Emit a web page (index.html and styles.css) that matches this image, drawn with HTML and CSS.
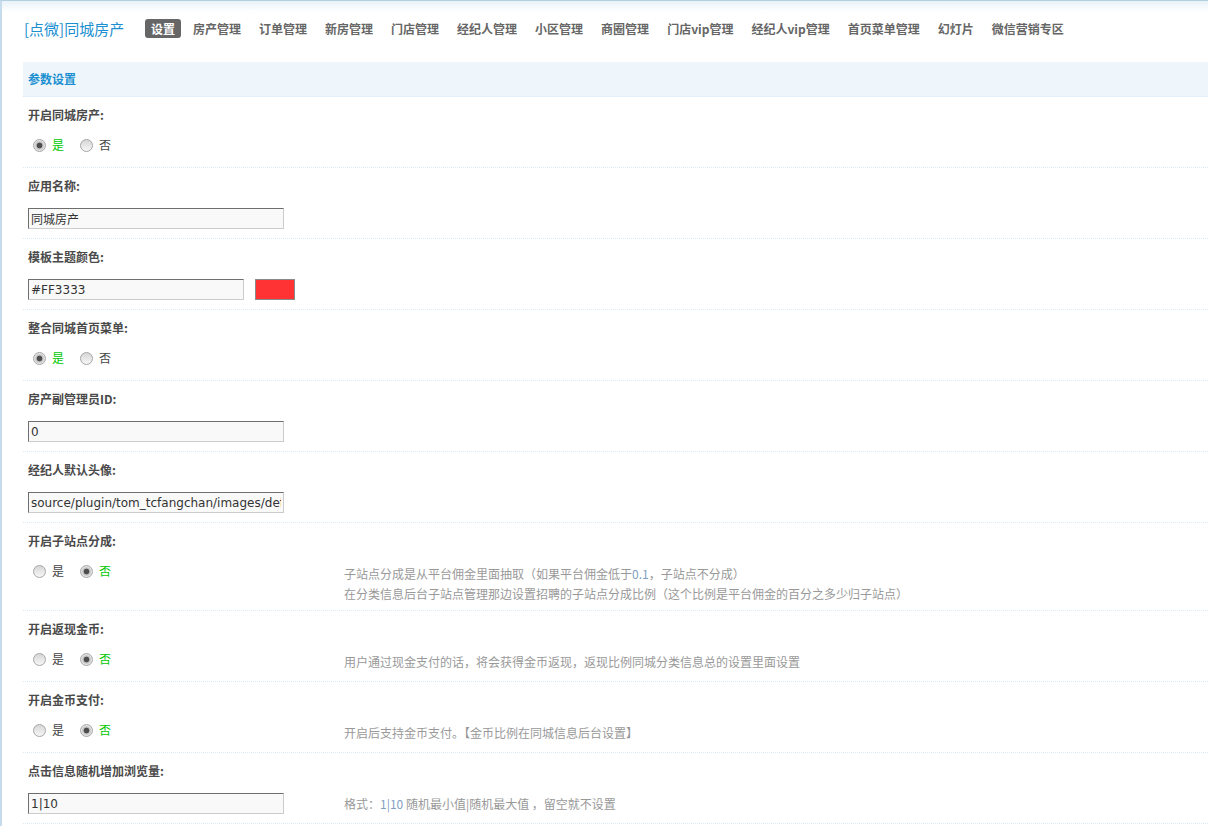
FILE: index.html
```html
<!DOCTYPE html>
<html lang="zh-CN">
<head>
<meta charset="utf-8">
<title>同城房产 - 设置</title>
<link rel="stylesheet" href="styles.css">
</head>
<body>
<div class="page">
  <div class="topbar">
    <h3 class="title">[点微]同城房产</h3>
    <ul class="nav">
      <li class="active">设置</li>
      <li>房产管理</li>
      <li>订单管理</li>
      <li>新房管理</li>
      <li>门店管理</li>
      <li>经纪人管理</li>
      <li>小区管理</li>
      <li>商圈管理</li>
      <li>门店vip管理</li>
      <li>经纪人vip管理</li>
      <li>首页菜单管理</li>
      <li>幻灯片</li>
      <li>微信营销专区</li>
    </ul>
  </div>

  <div class="form">
    <div class="partition">参数设置</div>

    <div class="item">
      <div class="label">开启同城房产:</div>
      <div class="value">
        <div class="ctrl radios">
          <label class="opt on"><input type="radio" name="r1" checked><span>是</span></label>
          <label class="opt"><input type="radio" name="r1"><span>否</span></label>
        </div>
        <div class="tip"></div>
      </div>
    </div>

    <div class="item">
      <div class="label">应用名称:</div>
      <div class="value">
        <div class="ctrl"><input class="txt" type="text" value="同城房产"></div>
        <div class="tip"></div>
      </div>
    </div>

    <div class="item">
      <div class="label">模板主题颜色:</div>
      <div class="value">
        <div class="ctrl color-ctrl"><input class="txt txt-color" type="text" value="#FF3333"><span class="swatch"></span></div>
        <div class="tip"></div>
      </div>
    </div>

    <div class="item">
      <div class="label">整合同城首页菜单:</div>
      <div class="value">
        <div class="ctrl radios">
          <label class="opt on"><input type="radio" name="r2" checked><span>是</span></label>
          <label class="opt"><input type="radio" name="r2"><span>否</span></label>
        </div>
        <div class="tip"></div>
      </div>
    </div>

    <div class="item">
      <div class="label">房产副管理员ID:</div>
      <div class="value">
        <div class="ctrl"><input class="txt" type="text" value="0"></div>
        <div class="tip"></div>
      </div>
    </div>

    <div class="item">
      <div class="label">经纪人默认头像:</div>
      <div class="value">
        <div class="ctrl"><input class="txt" type="text" value="source/plugin/tom_tcfangchan/images/default_avatar.png"></div>
        <div class="tip"></div>
      </div>
    </div>

    <div class="item">
      <div class="label">开启子站点分成:</div>
      <div class="value">
        <div class="ctrl radios">
          <label class="opt"><input type="radio" name="r3"><span>是</span></label>
          <label class="opt on"><input type="radio" name="r3" checked><span>否</span></label>
        </div>
        <div class="tip">子站点分成是从平台佣金里面抽取（如果平台佣金低于<span class="hl">0.1</span>，子站点不分成）<br>在分类信息后台子站点管理那边设置招聘的子站点分成比例（这个比例是平台佣金的百分之多少归子站点）</div>
      </div>
    </div>

    <div class="item">
      <div class="label">开启返现金币:</div>
      <div class="value">
        <div class="ctrl radios">
          <label class="opt"><input type="radio" name="r4"><span>是</span></label>
          <label class="opt on"><input type="radio" name="r4" checked><span>否</span></label>
        </div>
        <div class="tip">用户通过现金支付的话，将会获得金币返现，返现比例同城分类信息总的设置里面设置</div>
      </div>
    </div>

    <div class="item">
      <div class="label">开启金币支付:</div>
      <div class="value">
        <div class="ctrl radios">
          <label class="opt"><input type="radio" name="r5"><span>是</span></label>
          <label class="opt on"><input type="radio" name="r5" checked><span>否</span></label>
        </div>
        <div class="tip">开启后支持金币支付。【金币比例在同城信息后台设置】</div>
      </div>
    </div>

    <div class="item">
      <div class="label">点击信息随机增加浏览量:</div>
      <div class="value">
        <div class="ctrl"><input class="txt" type="text" value="1|10"></div>
        <div class="tip">格式：<span class="hl">1|10</span> 随机最小值|随机最大值 ，留空就不设置</div>
      </div>
    </div>
  </div>
</div>
</body>
</html>
```

FILE: styles.css
```css
html, body {
  margin: 0;
  padding: 0;
}

body {
  min-height: 826px;
  box-sizing: border-box;
  border-top: 1px solid #b3cfe0;
  border-left: 2px solid #c6dcec;
  background: #fff linear-gradient(#e6f1f8, #ffffff 12px) no-repeat top left;
  font-family: "Noto Sans CJK SC", "Noto Sans", sans-serif;
  font-size: 12px;
  color: #333;
}

.page {
  padding-left: 21px;
}

/* ---------- top bar ---------- */
.topbar {
  display: flex;
  align-items: center;
  height: 55px;
}

.title {
  margin: 0 0 0 1px;
  width: 121px;
  flex: 0 0 auto;
  font-size: 15px;
  font-weight: normal;
  color: #1b8fd0;
  line-height: 20px;
  white-space: nowrap;
}

.nav {
  display: flex;
  align-items: center;
  list-style: none;
  margin: 0;
  padding: 0;
}

.nav li {
  padding: 0 6px;
  margin-right: 6px;
  height: 19px;
  line-height: 19px;
  font-weight: bold;
  color: #666;
  border-radius: 3px;
  white-space: nowrap;
}

.nav li.active {
  background: #666;
  color: #fff;
}

/* ---------- form ---------- */
.form {
  margin-top: 6px;
}

.partition {
  height: 34px;
  line-height: 34px;
  padding-left: 5px;
  background: #eef6fc;
  border-bottom: 1px dotted #d6eaf8;
  font-weight: bold;
  color: #1b8fd0;
}

.item {
  border-bottom: 1px dotted #d6eaf8;
}

.label {
  box-sizing: border-box;
  height: 30px;
  padding: 10px 0 0 5px;
  line-height: 16px;
  font-weight: bold;
  color: #4a4a4a;
}

.value {
  display: flex;
  min-height: 40px;
}

.ctrl {
  box-sizing: border-box;
  flex: 0 0 321px;
  padding: 10px 0 9px 5px;
  display: flex;
  align-items: flex-start;
}

.ctrl.radios {
  padding: 8px 0 0 5px;
}

.tip {
  flex: 1;
  padding: 11px 0 6px 0;
  line-height: 20px;
  color: #999;
}

.tip .hl {
  color: #7f9fc2;
}

/* text inputs */
.txt {
  box-sizing: border-box;
  width: 256px;
  height: 21px;
  margin: 0;
  padding: 0 2px;
  border: 1px solid #ccc;
  border-top-color: #6e6e6e;
  border-left-color: #6e6e6e;
  background: #f9f9f9;
  font-family: "DejaVu Sans", "Noto Sans CJK SC", sans-serif;
  font-size: 12px;
  color: #333;
  outline: none;
}

.txt-color {
  width: 216px;
}

.swatch {
  display: block;
  box-sizing: border-box;
  width: 40px;
  height: 21px;
  margin-left: 11px;
  background: #ff3333;
  border: 1px solid #8a8a8a;
}

/* radios */
.opt {
  display: flex;
  align-items: center;
  height: 20px;
  margin-right: 11px;
  line-height: 20px;
  color: #444;
}

.opt.on span {
  color: #00c800;
}

.opt input {
  -webkit-appearance: none;
  appearance: none;
  box-sizing: border-box;
  width: 13px;
  height: 13px;
  margin: 0 6px 0 5px;
  border-radius: 50%;
  border: 1px solid #a6a6a6;
  background: linear-gradient(#d6d6d6, #f7f7f7);
}

.opt input:checked {
  background: radial-gradient(circle, #4d4d4d 0, #4d4d4d 2.4px, #bdbdbd 3.2px, #e2e2e2 5px, #f2f2f2 6px);
}
```
